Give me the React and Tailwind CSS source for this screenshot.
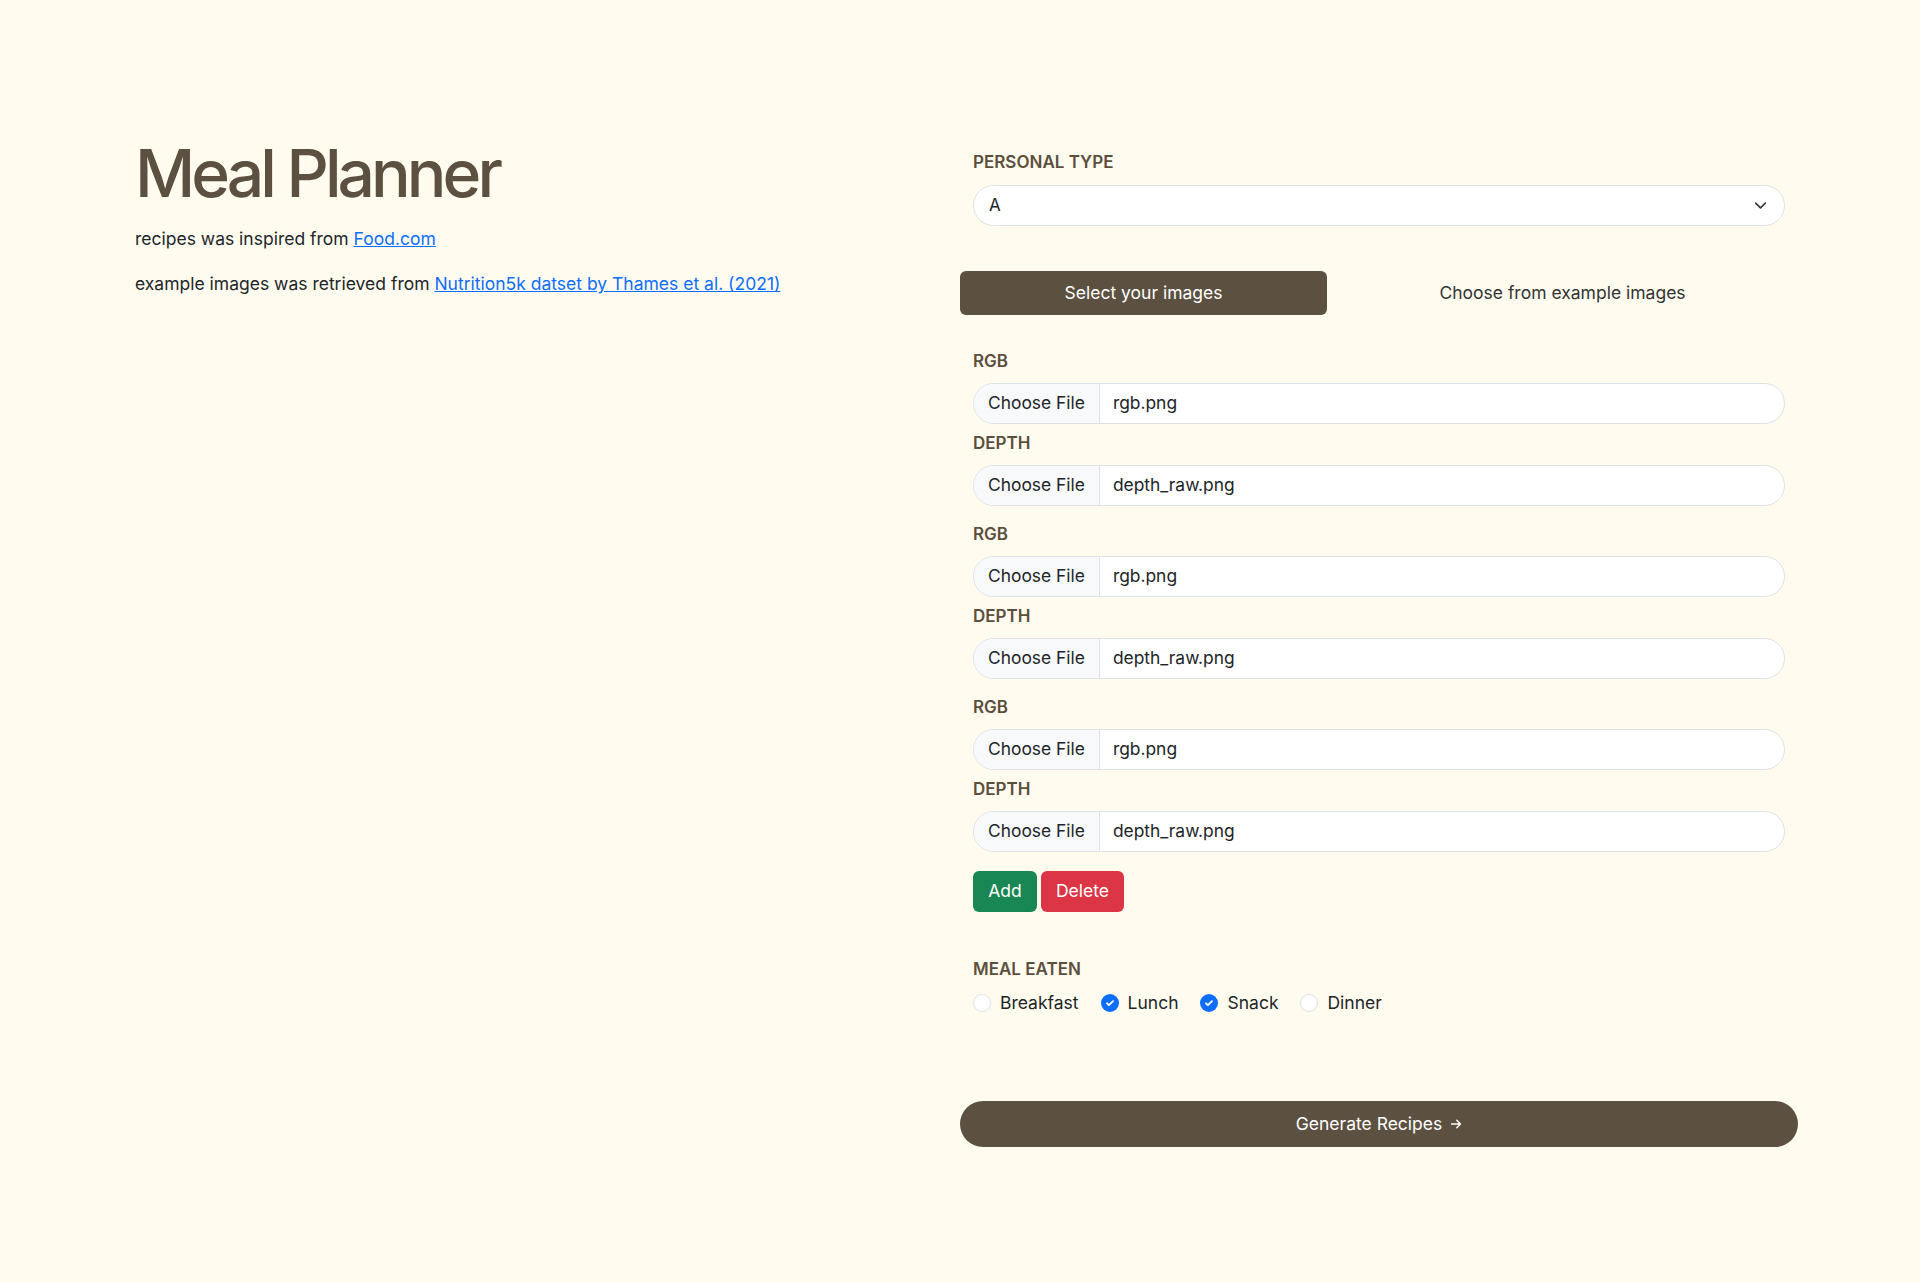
import { useState } from 'react';

const FONT = "font-['Inter','Noto_Sans',sans-serif]";

function FieldLabel({ children, className = '' }) {
  return (
    <div className={`text-[17px] leading-6 font-semibold uppercase text-[#5c4e3d] ${className}`}>
      {children}
    </div>
  );
}

function FileField({ name }) {
  return (
    <div className="flex h-[41px] items-stretch overflow-hidden rounded-full border border-[#dee2e6] bg-white text-[17.4px] text-[#212529]">
      <span className="flex items-center border-r border-[#dee2e6] bg-[#f8f9fa] px-[14px]">Choose File</span>
      <span className="flex items-center pl-[13px]">{name}</span>
    </div>
  );
}

function CheckItem({ label, checked }) {
  return (
    <label className="flex items-center gap-[9px] text-[17.5px] text-[#212529]">
      {checked ? (
        <span className="flex h-[18px] w-[18px] items-center justify-center rounded-full bg-[#0d6efd]">
          <svg viewBox="0 0 20 20" className="h-[12px] w-[12px]" fill="none" stroke="white" strokeWidth="3" strokeLinecap="round" strokeLinejoin="round">
            <path d="M5 10.5l3.2 3.2L15 7" />
          </svg>
        </span>
      ) : (
        <span className="h-[18px] w-[18px] rounded-full border border-[#dee2e6] bg-white" />
      )}
      {label}
    </label>
  );
}

export default function App() {
  const [tab] = useState('own');
  const groups = [0, 1, 2];

  return (
    <div className={`min-h-screen bg-[#fffcef] ${FONT}`}>
      <div className="flex">
        {/* left column */}
        <div className="w-[960px] pl-[135px] pt-[140px]">
          <h1 className="text-[66px] leading-none font-medium tracking-[-0.06em] text-[#5c5040]">Meal Planner</h1>
          <p className="mt-[20px] text-[17.5px] text-[#212529]">
            recipes was inspired from{' '}
            <a href="#" className="text-[#0d6efd] underline">Food.com</a>
          </p>
          <p className="mt-[19px] text-[17.5px] text-[#212529]">
            example images was retrieved from{' '}
            <a href="#" className="text-[#0d6efd] underline">Nutrition5k datset by Thames et al. (2021)</a>
          </p>
        </div>

        {/* right column */}
        <div className="w-[838px] pt-[150px]">
          <div className="px-[13px]">
            <FieldLabel>Personal Type</FieldLabel>
            <div className="mt-[11px] flex h-[41px] items-center justify-between rounded-full border border-[#dee2e6] bg-white pl-[15px] pr-[17px] text-[17px] text-[#212529]">
              <span>A</span>
              <svg viewBox="0 0 16 16" className="h-[13px] w-[13px]" fill="none" stroke="#343a40" strokeWidth="2" strokeLinecap="round" strokeLinejoin="round">
                <path d="M2 5l6 6 6-6" />
              </svg>
            </div>
          </div>

          <div className="mt-[45px] flex h-[44px]">
            <button className={`w-[367px] rounded-md text-[17.5px] ${tab === 'own' ? 'bg-[#5c5040] text-white' : 'text-[#333]'}`}>
              Select your images
            </button>
            <button className="flex-1 text-[17.5px] text-[#333]">Choose from example images</button>
          </div>

          <div className="mt-[34px] px-[13px]">
            {groups.map((g) => (
              <div key={g} className="mb-[16px]">
                <FieldLabel>RGB</FieldLabel>
                <div className="mt-[10px]">
                  <FileField name="rgb.png" />
                </div>
                <FieldLabel className="mt-[7px]">Depth</FieldLabel>
                <div className="mt-[10px]">
                  <FileField name="depth_raw.png" />
                </div>
              </div>
            ))}

            <div className="mt-[19px] flex gap-[4px]">
              <button className="h-[41px] w-[64px] rounded-md bg-[#198754] text-[17.5px] text-white">Add</button>
              <button className="h-[41px] w-[83px] rounded-md bg-[#dc3545] text-[17.5px] text-white">Delete</button>
            </div>

            <FieldLabel className="mt-[45px]">Meal Eaten</FieldLabel>
            <div className="mt-[9px] flex items-center gap-[22px]">
              <CheckItem label="Breakfast" />
              <CheckItem label="Lunch" checked />
              <CheckItem label="Snack" checked />
              <CheckItem label="Dinner" />
            </div>
          </div>

          <button className="mt-[85px] flex h-[46px] w-full items-center justify-center gap-[8px] rounded-full bg-[#5c5040] text-[17.5px] text-white">
            Generate Recipes
            <svg viewBox="0 0 16 16" className="h-[12px] w-[12px]" fill="none" stroke="white" strokeWidth="1.8" strokeLinecap="round" strokeLinejoin="round">
              <path d="M2 8h12M9 3l5 5-5 5" />
            </svg>
          </button>
        </div>
      </div>
    </div>
  );
}
